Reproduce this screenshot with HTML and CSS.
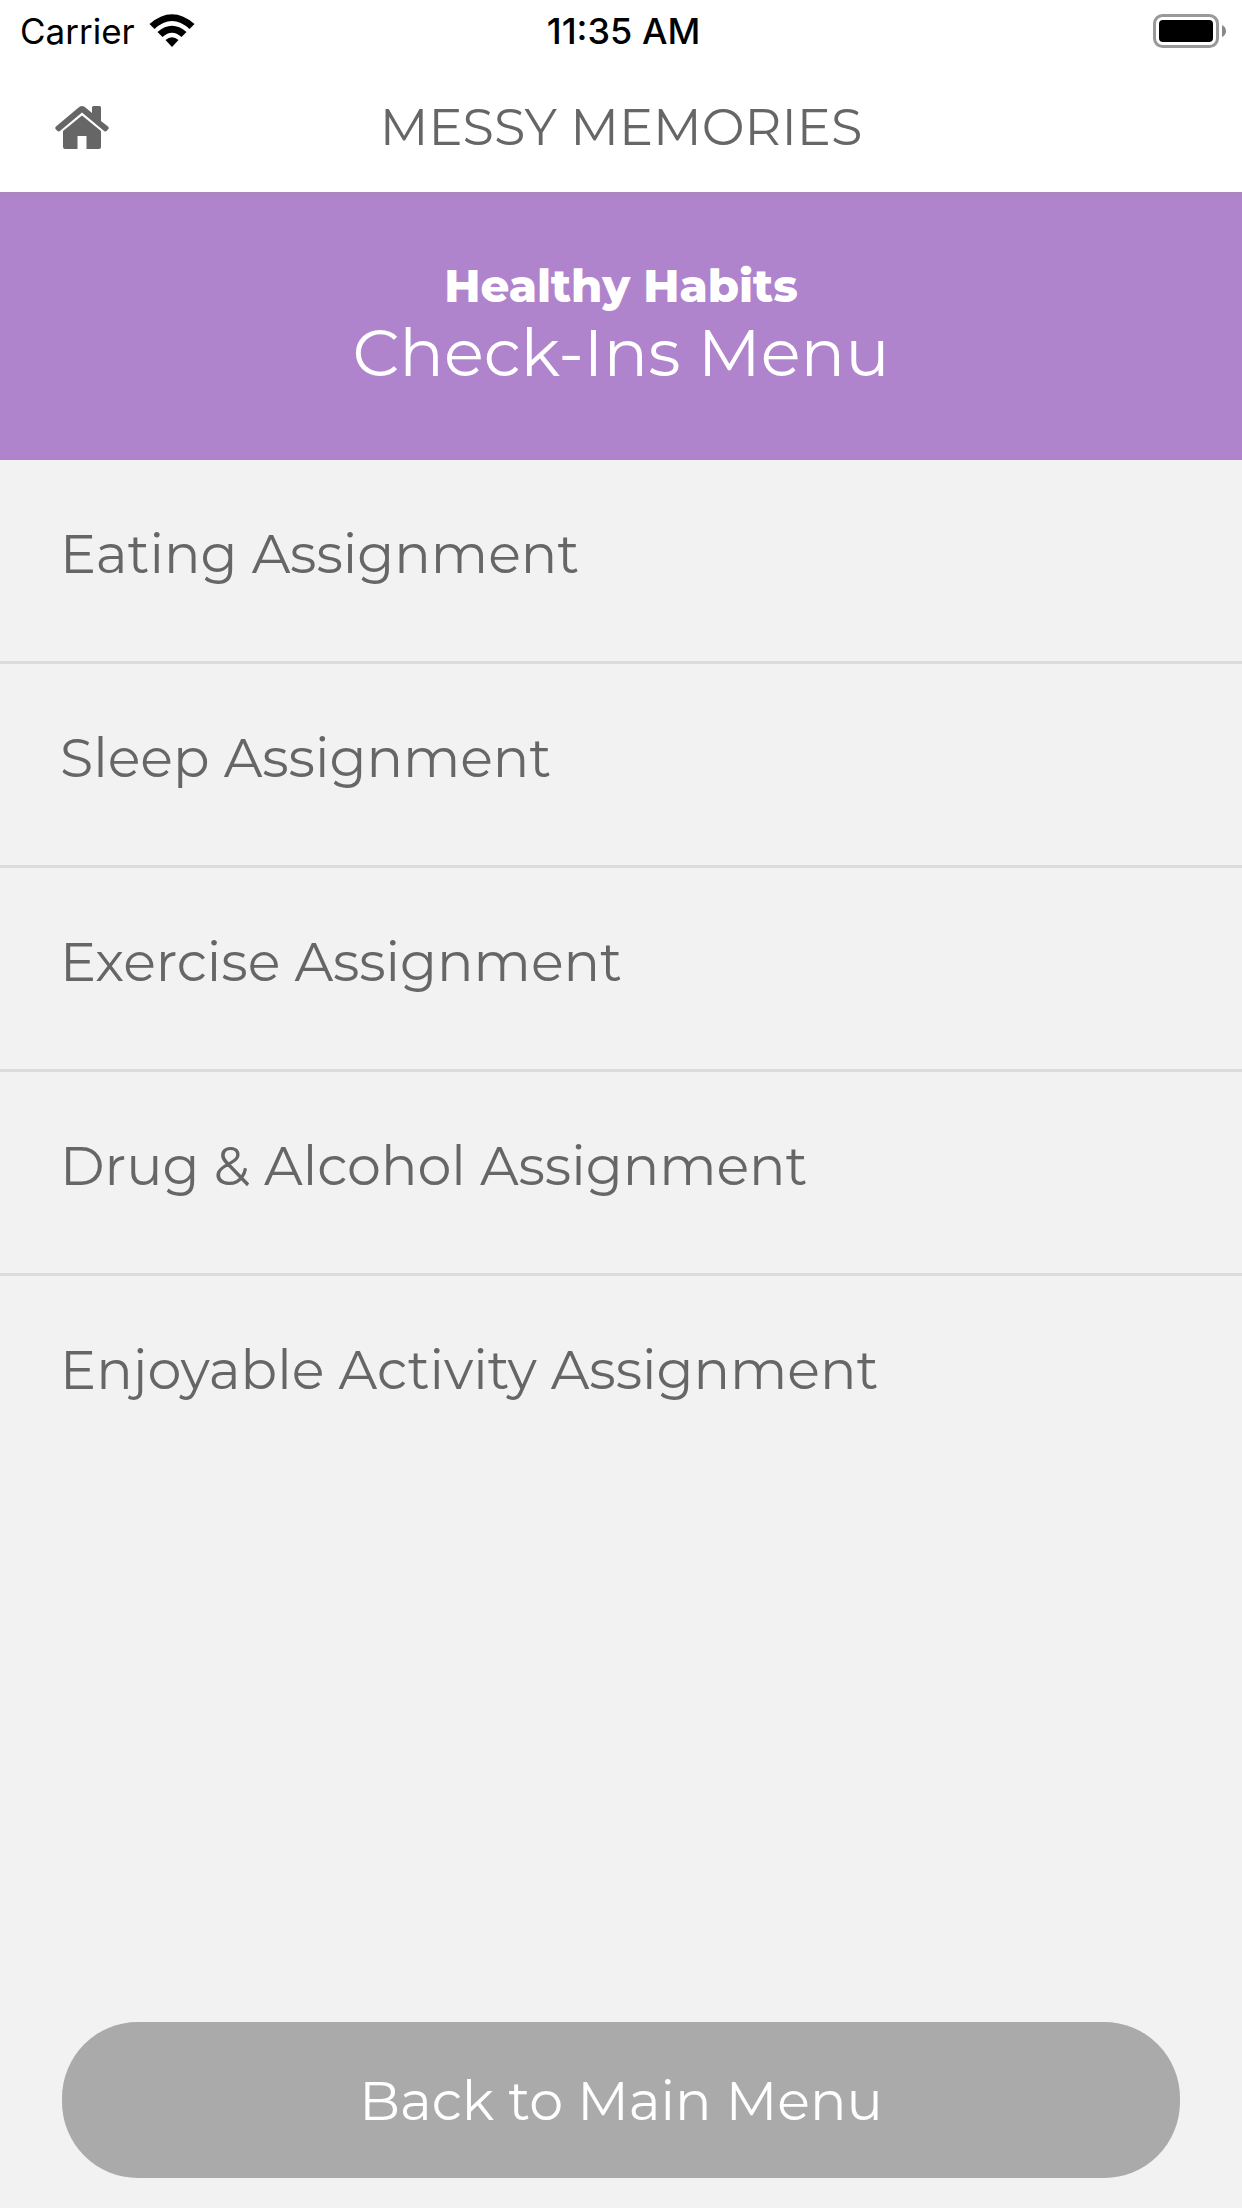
FILE: index.html
```html
<!DOCTYPE html>
<html lang="en">

<head>
    <meta charset="UTF-8">
    <meta name="viewport" content="width=device-width, initial-scale=1.0">
    <title>Messy Memories</title>
    <link rel="stylesheet" href="styles.css">
</head>

<body>

    <div class="status-bar">
        <div class="carrier">
            <span>Carrier</span>
            <svg class="wifi" viewBox="0 0 46 34" width="46" height="34" aria-hidden="true">
                <path d="M0.5 10 Q23 -9.5 45.5 10 L40.5 15 Q23 -1 5.500 15 Z"/>
                <path d="M8.500 18 Q23 5.500 37.500 18 L32.500 23 Q23 14.500 13.500 23 Z"/>
                <path d="M16.500 26 Q23 20.500 29.500 26 L23 33 Z"/>
            </svg>
        </div>
        <div class="time">11:35 AM</div>
        <svg class="battery" viewBox="0 0 74 34" width="74" height="34" aria-hidden="true">
            <rect x="1.500" y="1.500" width="63" height="31" rx="8" fill="none" stroke="#999" stroke-width="3"/>
            <rect x="6" y="6" width="54" height="22" rx="4"/>
            <path d="M69 11 Q73 13 73 17 Q73 21 69 23 Z" fill="#888"/>
        </svg>
    </div>

    <header class="header">
        <a class="home" href="#" aria-label="Home">
            <svg viewBox="0 0 54 43" width="54" height="43" aria-hidden="true">
                <path d="M27 0 Q29 0 31 2 L37 7 V1.500 Q37 0 38.500 0 H44.500 Q46 0 46 1.500 V15 L53 20.500 Q54.500 22 53 23.500 L51.500 25 Q50 26 48.500 24.500 L27 6.500 L5.500 24.500 Q4 26 2.500 25 L1 23.500 Q-0.500 22 1 20.500 L23 2 Q25 0 27 0 Z"/>
                <path d="M27 9.500 L46 25 V41 Q46 43 44 43 H31.500 V30 H22.500 V43 H10 Q8 43 8 41 V25 Z"/>
            </svg>
        </a>
        <h1 class="app-title">MESSY MEMORIES</h1>
    </header>

    <section class="banner">
        <p class="banner-label">Healthy Habits</p>
        <h2 class="banner-title">Check-Ins Menu</h2>
    </section>

    <nav class="menu">
        <a class="menu-item" href="#">Eating Assignment</a>
        <a class="menu-item" href="#">Sleep Assignment</a>
        <a class="menu-item" href="#">Exercise Assignment</a>
        <a class="menu-item" href="#">Drug &amp; Alcohol Assignment</a>
        <a class="menu-item" href="#">Enjoyable Activity Assignment</a>
    </nav>

    <footer class="footer">
        <button class="back-btn" type="button">Back to Main Menu</button>
    </footer>

</body>

</html>
```

FILE: styles.css
```css
* {
    box-sizing: border-box;
}

body {
    margin: 0;
    min-height: 100vh;
    display: flex;
    flex-direction: column;
    background: #f2f2f2;
    color: #666;
    font-family: Montserrat, Inter, sans-serif;
}

.status-bar {
    display: grid;
    grid-template-columns: 1fr auto 1fr;
    align-items: center;
    height: 62px;
    padding: 0 15px 0 20px;
    background: #fff;
    color: #000;
    font-family: Inter, sans-serif;
    font-size: 35px;
}

.carrier {
    display: flex;
    align-items: center;
    gap: 14px;
}

.time {
    font-size: 36px;
    font-weight: 500;
}

.battery {
    justify-self: end;
}

.header {
    display: grid;
    grid-template-columns: 1fr auto 1fr;
    align-items: center;
    height: 130px;
    padding: 0 55px;
    background: #fff;
}

.home {
    display: flex;
    fill: #666;
}

.app-title {
    margin: 0;
    font-size: 51px;
    font-weight: 400;
}

.banner {
    padding: 63px 20px 69px;
    border-top: 3px solid #ab86c0;
    background: #af84cc;
    color: #fff;
    text-align: center;
}

.banner-label {
    margin: 0;
    font-size: 45px;
    font-weight: 800;
    line-height: 56px;
}

.banner-title {
    margin: 0;
    font-size: 66px;
    font-weight: 400;
    line-height: 77px;
}

.menu {
    display: flex;
    flex-direction: column;
}

.menu-item {
    padding: 60px 60px 73px;
    border-bottom: 3px solid #dcdcdc;
    color: #666;
    font-size: 54px;
    font-weight: 400;
    line-height: 68px;
    text-decoration: none;
}

.menu-item:last-child {
    border-bottom: none;
}

.footer {
    margin-top: auto;
    padding: 30px 62px;
}

.back-btn {
    display: block;
    width: 100%;
    padding: 45px 20px 43px;
    border: none;
    border-radius: 76px;
    background: #aaa;
    color: #fff;
    font-family: inherit;
    font-size: 54px;
    font-weight: 400;
    line-height: 68px;
    cursor: pointer;
}
```
